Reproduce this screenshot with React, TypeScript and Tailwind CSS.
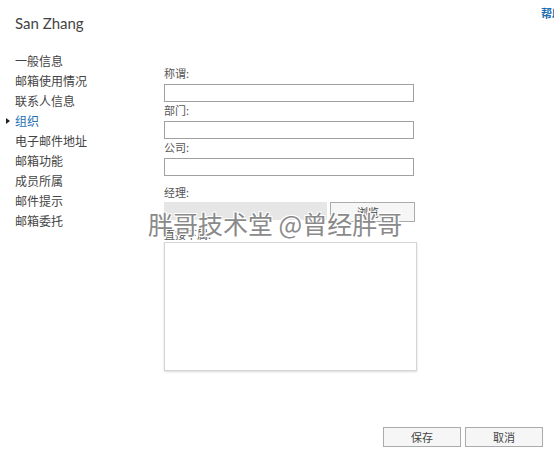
const NAV = [
  "一般信息",
  "邮箱使用情况",
  "联系人信息",
  "组织",
  "电子邮件地址",
  "邮箱功能",
  "成员所属",
  "邮件提示",
  "邮箱委托",
];

const font = { fontFamily: '"Segoe UI", "Noto Sans CJK SC", "Open Sans", sans-serif' };

function Field({ label }: { label: string }) {
  return (
    <div>
      <div className="h-[16px] text-[11px] leading-[16px] text-[#555]">{label}</div>
      <div className="mt-[3px] h-[18px] w-[250px] border border-[#a0a0a0] bg-white" />
    </div>
  );
}

export default function App() {
  return (
    <div className="relative h-[451px] w-[554px] overflow-hidden bg-white" style={font}>
      <div className="flex items-start justify-between pl-[15px]">
        <div className="pt-[12px] text-[15px] leading-[22px] text-[#444]" style={{ fontFamily: "Lato, sans-serif" }}>
          San Zhang
        </div>
        <div className="mr-[-9px] pt-[5px] text-[11px] font-bold text-[#1f6fb4]">帮助</div>
      </div>

      <div className="mt-[17px] flex">
        <ul className="w-[164px] shrink-0">
          {NAV.map((n) => {
            const active = n === "组织";
            return (
              <li
                key={n}
                className={`relative h-[20px] pl-[15px] text-[12px] leading-[20px] ${
                  active ? "text-[#1f6fb4]" : "text-[#444]"
                }`}
              >
                {active && (
                  <span className="absolute left-[6px] top-[7px] h-0 w-0 border-y-[3px] border-l-[4px] border-y-transparent border-l-[#222]" />
                )}
                {n}
              </li>
            );
          })}
        </ul>

        <div className="flex flex-col pt-[14px]">
          <Field label="称谓:" />
          <Field label="部门:" />
          <Field label="公司:" />
          <div className="mt-[8px] h-[16px] text-[11px] leading-[16px] text-[#555]">经理:</div>
          <div className="mt-[2px] flex gap-[3px]">
            <div className="h-[18px] w-[163px] bg-[#e6e6e6]" />
            <button className="h-[20px] w-[85px] border border-[#ababab] bg-[#f6f6f6] text-[11px] leading-[18px] text-[#444]">
              浏览...
            </button>
          </div>
          <div className="mt-[4px] h-[16px] text-[11px] leading-[16px] text-[#555]">直接下属:</div>
          <div className="h-[129px] w-[253px] border border-[#d4d4d4] bg-white shadow-[0_1px_2px_rgba(0,0,0,0.15)]" />
        </div>
      </div>

      <div className="mt-[56px] flex justify-end gap-[4px] pr-[11px]">
        <button className="h-[20px] w-[78px] border border-[#ababab] bg-[#f6f6f6] text-[11px] leading-[18px] text-[#444]">
          保存
        </button>
        <button className="h-[20px] w-[78px] border border-[#ababab] bg-[#f6f6f6] text-[11px] leading-[18px] text-[#444]">
          取消
        </button>
      </div>

      <div
        className="pointer-events-none absolute left-[148px] top-[207px] text-[25px] leading-[32px] text-[#8a8a8a]"
        style={{ textShadow: "1px 1px 0 #fff, -1px -1px 0 #fff, 1px -1px 0 #fff, -1px 1px 0 #fff" }}
      >
        胖哥技术堂 @曾经胖哥
      </div>
    </div>
  );
}
